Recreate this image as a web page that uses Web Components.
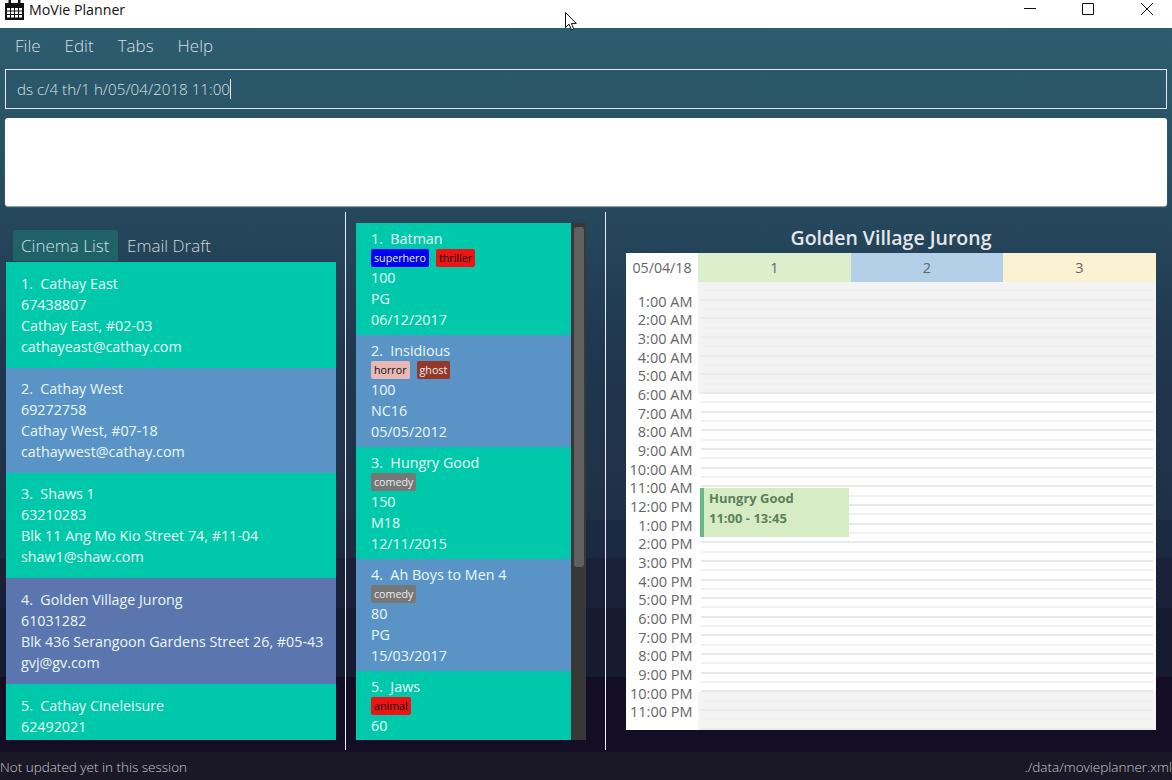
<!DOCTYPE html>
<html><head><meta charset="utf-8">
<style>
html,body{margin:0;padding:0;height:100%;overflow:hidden}
body{width:1172px;height:780px;font-family:"Open Sans","Noto Sans",sans-serif;background:#fff}
</style></head>
<body>
<movie-app></movie-app>
<script>
function def(name, css, html, init){
  customElements.define(name, class extends HTMLElement{
    connectedCallback(){
      if(this.shadowRoot) return;
      const r=this.attachShadow({mode:'open'});
      r.innerHTML='<style>'+css+'</style>'+(typeof html==='function'?html(this):html);
      if(init) init(r,this);
    }
  });
}
const FONT='"Open Sans","Noto Sans",sans-serif';
def('title-bar',`
:host{display:flex;align-items:center;height:28px;background:#fff;color:#111;font:14.200px ${FONT}}
.ic{margin:0 5px 0 5px;display:block;flex:none}
.t{flex:1;position:relative;top:-5px}
.c{display:flex;gap:0;flex:none;height:28px}
.c svg{display:block}
`,`<svg class="ic" width="19" height="20" viewBox="0 0 19 20" style="margin-top:-8px">
<path d="M0 3h19v17H0z" fill="#111"/><path d="M3.500 0h2.500v4H3.500zM13 0h2.500v4H13z" fill="#111"/>
<path d="M2 8h3v2.500H2zM6 8h3v2.500H6zM10 8h3v2.500h-3zM14 8h3v2.500h-3zM2 11.500h3V14H2zM6 11.500h3V14H6zM10 11.500h3V14h-3zM14 11.500h3V14h-3zM2 15h3v2.500H2zM6 15h3v2.500H6zM10 15h3v2.500h-3zM14 15h3v2.500h-3z" fill="#fff"/></svg>
<span class="t">MoVie Planner</span>
<span class="c"><svg width="172" height="28" viewBox="0 0 172 28" fill="none" stroke="#111" stroke-width="1">
<path d="M24 8.500h12"/><path d="M82.500 3.500h11v11h-11z"/><path d="M141 3l12 12M153 3l-12 12"/></svg></span>`);
def('menu-bar',`
:host{display:flex;height:38px;align-items:center;padding:0 0 3px 15px;gap:24px;color:#d7dee2;font:17px ${FONT};font-weight:300;box-sizing:border-box}
`,`<span>File</span><span>Edit</span><span>Tabs</span><span>Help</span>`);
def('command-box',`
:host{display:flex;align-items:center;height:40px;margin:3px 5px 0;box-sizing:border-box;border:1px solid #e4eaec;padding-left:11px;color:#d6e2e7;font:15.200px ${FONT};font-weight:300}
i{display:inline-block;width:1px;height:20px;background:#e8eef0;margin-left:0}
`,`<span><slot></slot></span><i></i>`);
def('result-box',`
:host{display:block;height:88px;margin:9px 5px 0 5px;background:#fff;border-radius:3px;box-shadow:0 1px 1px #9aa}
`,``);
def('tab-header',`
:host{display:flex;height:31px;margin:18px 0 1px 13px;font:17px ${FONT};font-weight:300;color:#cfd6da;align-items:center;white-space:nowrap}
span{display:flex;align-items:center;height:31px;box-sizing:border-box;padding:0 9px 0 8px}
.a{background:#1f6369;border-radius:3px 3px 0 0;color:#d3dfe4;width:105px;padding-left:8px;box-sizing:border-box;margin-right:1px}
`,`<span class="a">Cinema List</span><span>Email Draft</span>`);
def('cinema-card',`
:host{display:block;box-sizing:border-box;height:var(--h,105px);padding:var(--p,11px) 6px 0 15px;background:#00c9ab;color:#e9f8f5;font:14.300px/21px ${FONT};white-space:pre;flex:none}
:host([alt]){background:#5a94c6}
:host([sel]){background:#5b75af}
div{height:21px}
`,h=>`<div>${h.dataset.n}.  ${h.dataset.name}</div><div>${h.dataset.phone}</div><div>${h.dataset.addr}</div><div>${h.dataset.mail}</div>`);
def('cinema-list',`
:host{display:flex;flex-direction:column;height:478px;overflow:hidden;margin-left:6px;width:330px}
`,`<slot></slot>`);
def('tag-label',`
:host{display:inline-flex;align-items:center;height:18px;box-sizing:border-box;padding:0 3px;border-radius:2px;font:10.700px ${FONT};background:var(--c,#777);color:var(--f,#eee)}
`,`<slot></slot>`);
def('movie-card',`
:host{display:block;box-sizing:border-box;height:112px;padding:5px 6px 0 15px;background:#00c9ab;color:#e9f8f5;font:14.300px/21px ${FONT};white-space:pre;flex:none}
:host([alt]){background:#5a94c6}
div{height:21px}
.tags{height:18px;display:flex;gap:7px;line-height:18px}
`,h=>`<div>${h.dataset.n}.  ${h.dataset.name}</div><div class="tags"><slot></slot></div><div>${h.dataset.a}</div><div>${h.dataset.b}</div><div>${h.dataset.c}</div>`);
def('movie-list',`
:host{display:flex;height:517px;width:230px;margin:11px 0 0 10px;position:relative}
.l{display:flex;flex-direction:column;width:215px;overflow:hidden}
.s{width:15px;background:#383838;box-sizing:border-box;padding:4px 2px 0 3px;flex:none}
.s b{display:block;height:340px;background:#606060;border-radius:3px}
`,`<div class="l"><slot></slot></div><div class="s"><b></b></div>`);
def('schedule-view',`
:host{display:block;width:530px;margin-left:20px;font:14.500px ${FONT}}
h2{margin:12px 0 0;height:29px;font:600 19.500px/28px ${FONT};text-align:center;color:#e4e8ea}
.p{background:#fff;height:477px;display:flex;flex-direction:column;position:relative;overflow:hidden}
.h{display:grid;grid-template-columns:72px 153px 152px 153px;height:29px;text-align:center;line-height:29px;color:#666;flex:none}
.h span:first-child{color:#666;font-size:14.200px}
.b{display:flex;flex:1;min-height:0}
.t{width:72px;flex:none;box-sizing:border-box;padding:10.500px 5.500px 0 0;text-align:right;color:#666;font-size:14.500px}
.t div{height:18.680px;line-height:18.680px;white-space:nowrap}
.g{flex:1;position:relative;overflow:hidden}
.r{display:block;height:9.340px;box-sizing:border-box;margin:0 3px 0 3px;position:relative}
.r::after{content:"";position:absolute;left:0;right:0;bottom:0;height:2px;background:#f1f1f1}
.r.o::after{background:#e9e9e9}
.zone{background:#f3f3f3}
.zone .r::after{background:#f0f0f0}
.zone .r.o::after{background:#ebebeb}
.ev{position:absolute;left:2px;top:206px;width:149px;height:49px;box-sizing:border-box;background:#d5ecc5;border-left:4px solid #69b887;padding:0 0 0 5px;color:#5e7f5c;font:bold 13px/20px ${FONT}}
.ev div{height:20px;white-space:nowrap}
`,`<h2>Golden Village Jurong</h2><div class="p">
<div class="h"><span>05/04/18</span><span style="background:#dbefcd">1</span><span style="background:#b4d0e8">2</span><span style="background:#fbf1d3">3</span></div>
<div class="b"><div class="t" id="t"></div><div class="g" id="g"><div class="ev"><div>Hungry Good</div><div>11:00 - 13:45</div></div></div></div></div>`,
(r)=>{
  const t=r.getElementById('t'),g=r.getElementById('g');
  for(let i=1;i<=23;i++){const d=document.createElement('div');const h=i%12||12;d.textContent=h+':00 '+(i<12?'AM':'PM');t.appendChild(d);}
  const mk=(n,start,cl)=>{const z=document.createElement('div');if(cl)z.className=cl;for(let i=0;i<n;i++){const s=document.createElement('span');s.className='r'+((i+start)%2?' o':'');z.appendChild(s);}return z;};
  const ev=g.firstChild;
  g.insertBefore(mk(12,0,'zone'),ev);
  g.insertBefore(mk(32,0,''),ev);
  const z=mk(6,0,'zone');g.insertBefore(z,ev);
});
def('status-bar',`
:host{display:flex;justify-content:space-between;align-items:center;height:28px;background:#1a1726;color:#c9c9cf;font:13.500px ${FONT};font-weight:300;padding:2px 0 0 0;box-sizing:border-box;white-space:nowrap}
`,`<span>Not updated yet in this session</span><span>./data/movieplanner.xml</span>`);
def('cursor-mark',`
:host{position:absolute;left:565px;top:12px;display:block;width:14px;height:20px}
svg{display:block}
`,`<svg width="14" height="20" viewBox="0 0 14 20"><path d="M.5.500v15l3.500-3.300 2.500 5.800 2.300-1-2.500-5.600h5z" fill="#fff" stroke="#111" stroke-width="1"/></svg>`);
def('movie-app',`
:host{display:flex;flex-direction:column;width:1172px;height:780px;position:relative;overflow:hidden}
.w{flex:1;min-height:0;display:flex;flex-direction:column;background:linear-gradient(180deg,#2c5d6f 0,#2a5567 80px,#264a5e 170px,#20374f 320px,#1f3046 492px,#1b2a40 492px,#1b2a40 530px,#1a2038 530px,#1a2038 580px,#171b31 580px,#171b31 649px,#130d25 649px,#130d25 724px)}
.m{flex:1;min-height:0;display:flex;margin-top:6px}
.v{width:1px;background:#eef;flex:none;margin-bottom:2px}
.a{width:345px;flex:none}
.c{width:259px;flex:none}
.d{flex:1}
`,`<title-bar></title-bar><div class="w"><menu-bar></menu-bar>
<command-box>ds c/4 th/1 h/05/04/2018 11:00</command-box><result-box></result-box>
<div class="m"><div class="a"><tab-header></tab-header><cinema-list>
<cinema-card style="--h:106px;--p:11px" data-n="1" data-name="Cathay East" data-phone="67438807" data-addr="Cathay East, #02-03" data-mail="cathayeast@cathay.com"></cinema-card>
<cinema-card style="--h:105px;--p:10px" alt data-n="2" data-name="Cathay West" data-phone="69272758" data-addr="Cathay West, #07-18" data-mail="cathaywest@cathay.com"></cinema-card>
<cinema-card style="--h:105px;--p:10px" data-n="3" data-name="Shaws 1" data-phone="63210283" data-addr="Blk 11 Ang Mo Kio Street 74, #11-04" data-mail="shaw1@shaw.com"></cinema-card>
<cinema-card style="--h:106px;--p:11px" sel data-n="4" data-name="Golden Village Jurong" data-phone="61031282" data-addr="Blk 436 Serangoon Gardens Street 26, #05-43" data-mail="gvj@gv.com"></cinema-card>
<cinema-card style="--h:106px;--p:11px" data-n="5" data-name="Cathay Cineleisure" data-phone="62492021" data-addr="" data-mail=""></cinema-card>
</cinema-list></div><div class="v"></div>
<div class="c"><movie-list>
<movie-card data-n="1" data-name="Batman" data-a="100" data-b="PG" data-c="06/12/2017"><tag-label style="--c:#0000f0;--f:#e8f0ff">superhero</tag-label><tag-label style="--c:#ec1414;--f:#111">thriller</tag-label></movie-card>
<movie-card alt data-n="2" data-name="Insidious" data-a="100" data-b="NC16" data-c="05/05/2012"><tag-label style="--c:#e8b8b4;--f:#111">horror</tag-label><tag-label style="--c:#94382a;--f:#eee">ghost</tag-label></movie-card>
<movie-card data-n="3" data-name="Hungry Good" data-a="150" data-b="M18" data-c="12/11/2015"><tag-label style="--c:#777;--f:#eee">comedy</tag-label></movie-card>
<movie-card alt data-n="4" data-name="Ah Boys to Men 4" data-a="80" data-b="PG" data-c="15/03/2017"><tag-label style="--c:#777;--f:#eee">comedy</tag-label></movie-card>
<movie-card data-n="5" data-name="Jaws" data-a="60" data-b="" data-c=""><tag-label style="--c:#ec1414;--f:#111">animal</tag-label></movie-card>
</movie-list></div><div class="v"></div>
<div class="d"><schedule-view></schedule-view></div></div>
<status-bar></status-bar></div><cursor-mark></cursor-mark>`);
</script>
</body></html>
